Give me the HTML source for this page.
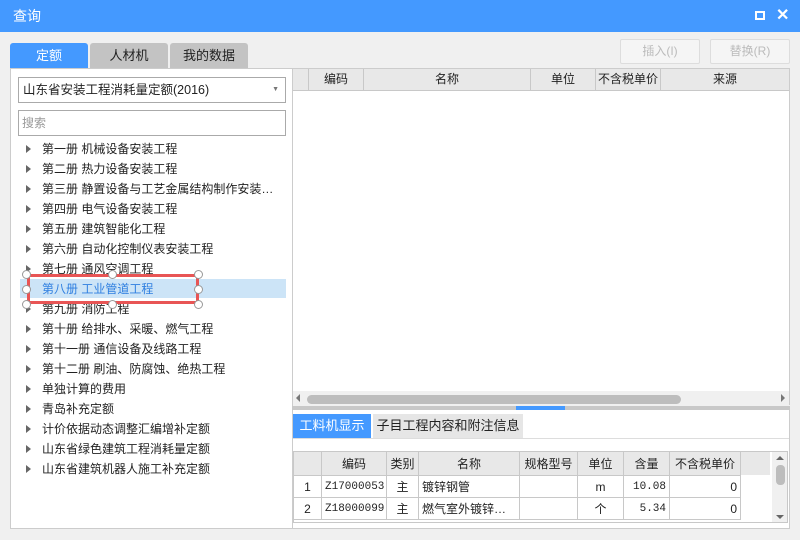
<!DOCTYPE html>
<html><head><meta charset="utf-8"><style>
*{margin:0;padding:0;box-sizing:border-box}
html,body{width:800px;height:540px;overflow:hidden}
body{background:#f0f0f0;font-family:"Liberation Sans","Noto Sans CJK SC",sans-serif;font-size:12px;color:#222;position:relative}
.a{position:absolute}
.title{left:0;top:0;width:800px;height:32px;background:#4499ff;color:#fff;font-size:14px;line-height:33px;padding-left:13px}
.tab{top:43px;height:25px;line-height:25px;text-align:center;font-size:13px;border-radius:3px 3px 0 0}
.btn{top:39px;height:25px;width:80px;border:1px solid #ddd;background:#f5f5f5;color:#bbb;text-align:center;line-height:23px;border-radius:2px;font-size:12px}
.tree div{position:absolute;left:26px;width:260px;white-space:nowrap;height:20px;line-height:20px;font-size:12px}
.tree div:before{content:"";position:absolute;left:0;top:6px;border-left:5px solid #666;border-top:4px solid transparent;border-bottom:4px solid transparent}
.tree span{margin-left:16px}
.h{position:absolute;top:0;height:21px;line-height:21px;text-align:center;border-right:1px solid #c8c8c8;font-size:12px;white-space:nowrap}
.c{position:absolute;height:22px;line-height:22px;border-right:1px solid #c8c8c8;border-bottom:1px solid #c8c8c8;font-size:12px;padding:0 3px;white-space:nowrap;overflow:hidden}
.hnd{position:absolute;width:9px;height:9px;border:1px solid #999;border-radius:50%;background:#fff}
</style></head><body>
<div class="a title">查询</div>
<div class="a" style="left:755px;top:11px;width:10px;height:9px;border:2px solid #fff"></div>
<div class="a" style="left:776px;top:5px;color:#fff;font-size:16px;font-weight:bold">✕</div>
<div class="a tab" style="left:10px;width:78px;background:#4499ff;color:#fff">定额</div>
<div class="a tab" style="left:90px;width:78px;background:#c3c3c3">人材机</div>
<div class="a tab" style="left:170px;width:78px;background:#c3c3c3">我的数据</div>
<div class="a btn" style="left:620px">插入(I)</div>
<div class="a btn" style="left:710px">替换(R)</div>
<div class="a" style="left:10px;top:68px;width:283px;height:461px;background:#fff;border:1px solid #ccc"></div>
<div class="a" style="left:18px;top:77px;width:268px;height:26px;border:1px solid #aaa;line-height:24px;padding-left:4px;font-size:12.5px;white-space:nowrap">山东省安装工程消耗量定额(2016)<span style="position:absolute;right:6px;top:0;font-size:7px;color:#777">▼</span></div>
<div class="a" style="left:18px;top:110px;width:268px;height:26px;border:1px solid #aaa;line-height:24px;padding-left:3px;color:#999">搜索</div>
<div class="a" style="left:20px;top:279px;width:266px;height:19px;background:#cce4f7"></div>
<div class="a tree" style="left:0;top:0;width:300px;height:540px">
<div style="top:139px"><span>第一册 机械设备安装工程</span></div>
<div style="top:159px"><span>第二册 热力设备安装工程</span></div>
<div style="top:179px"><span>第三册 静置设备与工艺金属结构制作安装…</span></div>
<div style="top:199px"><span>第四册 电气设备安装工程</span></div>
<div style="top:219px"><span>第五册 建筑智能化工程</span></div>
<div style="top:239px"><span>第六册 自动化控制仪表安装工程</span></div>
<div style="top:259px"><span>第七册 通风空调工程</span></div>
<div style="top:279px;color:#2f7fe0"><span>第八册 工业管道工程</span></div>
<div style="top:299px"><span>第九册 消防工程</span></div>
<div style="top:319px"><span>第十册 给排水、采暖、燃气工程</span></div>
<div style="top:339px"><span>第十一册 通信设备及线路工程</span></div>
<div style="top:359px"><span>第十二册 刷油、防腐蚀、绝热工程</span></div>
<div style="top:379px"><span>单独计算的费用</span></div>
<div style="top:399px"><span>青岛补充定额</span></div>
<div style="top:419px"><span>计价依据动态调整汇编增补定额</span></div>
<div style="top:439px"><span>山东省绿色建筑工程消耗量定额</span></div>
<div style="top:459px"><span>山东省建筑机器人施工补充定额</span></div>
</div>
<div class="a" style="left:27px;top:274px;width:172px;height:30px;border:3px solid #e85555"></div>
<div class="hnd" style="left:22px;top:270px"></div><div class="hnd" style="left:108px;top:270px"></div><div class="hnd" style="left:194px;top:270px"></div>
<div class="hnd" style="left:22px;top:285px"></div><div class="hnd" style="left:194px;top:285px"></div>
<div class="hnd" style="left:22px;top:300px"></div><div class="hnd" style="left:108px;top:300px"></div><div class="hnd" style="left:194px;top:300px"></div>
<div class="a" style="left:292px;top:68px;width:498px;height:337px;background:#fff;border:1px solid #ccc"></div>
<div class="a" style="left:293px;top:69px;width:496px;height:22px;background:#e8e8e8;border-bottom:1px solid #c8c8c8">
<div class="h" style="left:0;width:16px"></div>
<div class="h" style="left:16px;width:55px">编码</div>
<div class="h" style="left:71px;width:167px">名称</div>
<div class="h" style="left:238px;width:65px">单位</div>
<div class="h" style="left:303px;width:65px">不含税单价</div>
<div class="h" style="left:368px;width:128px;border:none">来源</div>
</div>
<div class="a" style="left:293px;top:391px;width:496px;height:14px;background:#f0f0f0"></div>
<div class="a" style="left:307px;top:395px;width:374px;height:9px;background:#bdbdbd;border-radius:5px"></div>
<div class="a" style="left:296px;top:394px;border-right:4px solid #777;border-top:4px solid transparent;border-bottom:4px solid transparent"></div>
<div class="a" style="left:781px;top:394px;border-left:4px solid #777;border-top:4px solid transparent;border-bottom:4px solid transparent"></div>
<div class="a" style="left:292px;top:406px;width:498px;height:4px;background:#c8c8c8"></div>
<div class="a" style="left:516px;top:406px;width:49px;height:4px;background:#4499ff"></div>
<div class="a" style="left:292px;top:410px;width:498px;height:119px;background:#fff;border:1px solid #ccc;border-top:none"></div>
<div class="a" style="left:293px;top:414px;width:78px;height:24px;background:#4499ff;color:#fff;line-height:24px;text-align:center;font-size:13px">工料机显示</div>
<div class="a" style="left:373px;top:414px;width:150px;height:24px;background:#e6e6e6;line-height:24px;text-align:center;font-size:13px">子目工程内容和附注信息</div>
<div class="a" style="left:293px;top:438px;width:496px;height:1px;background:#ddd"></div>
<div class="a" style="left:293px;top:451px;width:495px;height:72px;border:1px solid #c8c8c8;overflow:hidden">
<div class="a" style="left:0;top:0;width:476px;height:23px;background:#e8e8e8"></div>
<div class="c" style="left:0;top:0;width:28px;height:24px"></div>
<div class="c" style="left:28px;top:0;width:65px;height:24px;line-height:24px;text-align:center">编码</div>
<div class="c" style="left:93px;top:0;width:32px;height:24px;line-height:24px;text-align:center">类别</div>
<div class="c" style="left:125px;top:0;width:101px;height:24px;line-height:24px;text-align:center">名称</div>
<div class="c" style="left:226px;top:0;width:58px;height:24px;line-height:24px;text-align:center">规格型号</div>
<div class="c" style="left:284px;top:0;width:46px;height:24px;line-height:24px;text-align:center">单位</div>
<div class="c" style="left:330px;top:0;width:46px;height:24px;line-height:24px;text-align:center">含量</div>
<div class="c" style="left:376px;top:0;width:71px;height:24px;line-height:24px;text-align:center">不含税单价</div>
<div class="c" style="left:0;top:24px;width:28px;text-align:center;background:#fff">1</div>
<div class="c" style="left:28px;top:24px;width:65px;font-family:'Liberation Mono',monospace;font-size:11px">Z17000053</div>
<div class="c" style="left:93px;top:24px;width:32px;text-align:center">主</div>
<div class="c" style="left:125px;top:24px;width:101px">镀锌钢管</div>
<div class="c" style="left:226px;top:24px;width:58px"></div>
<div class="c" style="left:284px;top:24px;width:46px;text-align:center">m</div>
<div class="c" style="left:330px;top:24px;width:46px;text-align:right;font-family:'Liberation Mono',monospace;font-size:11px">10.08</div>
<div class="c" style="left:376px;top:24px;width:71px;text-align:right">0</div>
<div class="c" style="left:0;top:46px;width:28px;text-align:center">2</div>
<div class="c" style="left:28px;top:46px;width:65px;font-family:'Liberation Mono',monospace;font-size:11px">Z18000099</div>
<div class="c" style="left:93px;top:46px;width:32px;text-align:center">主</div>
<div class="c" style="left:125px;top:46px;width:101px">燃气室外镀锌…</div>
<div class="c" style="left:226px;top:46px;width:58px"></div>
<div class="c" style="left:284px;top:46px;width:46px;text-align:center">个</div>
<div class="c" style="left:330px;top:46px;width:46px;text-align:right;font-family:'Liberation Mono',monospace;font-size:11px">5.34</div>
<div class="c" style="left:376px;top:46px;width:71px;text-align:right">0</div>
<div class="a" style="left:478px;top:0;width:16px;height:72px;background:#f0f0f0"></div>
<div class="a" style="left:482px;top:13px;width:9px;height:20px;background:#bdbdbd;border-radius:4px"></div>
<div class="a" style="left:482px;top:4px;border-bottom:4px solid #666;border-left:4px solid transparent;border-right:4px solid transparent"></div>
<div class="a" style="left:482px;top:63px;border-top:4px solid #666;border-left:4px solid transparent;border-right:4px solid transparent"></div>
</div>
</body></html>
